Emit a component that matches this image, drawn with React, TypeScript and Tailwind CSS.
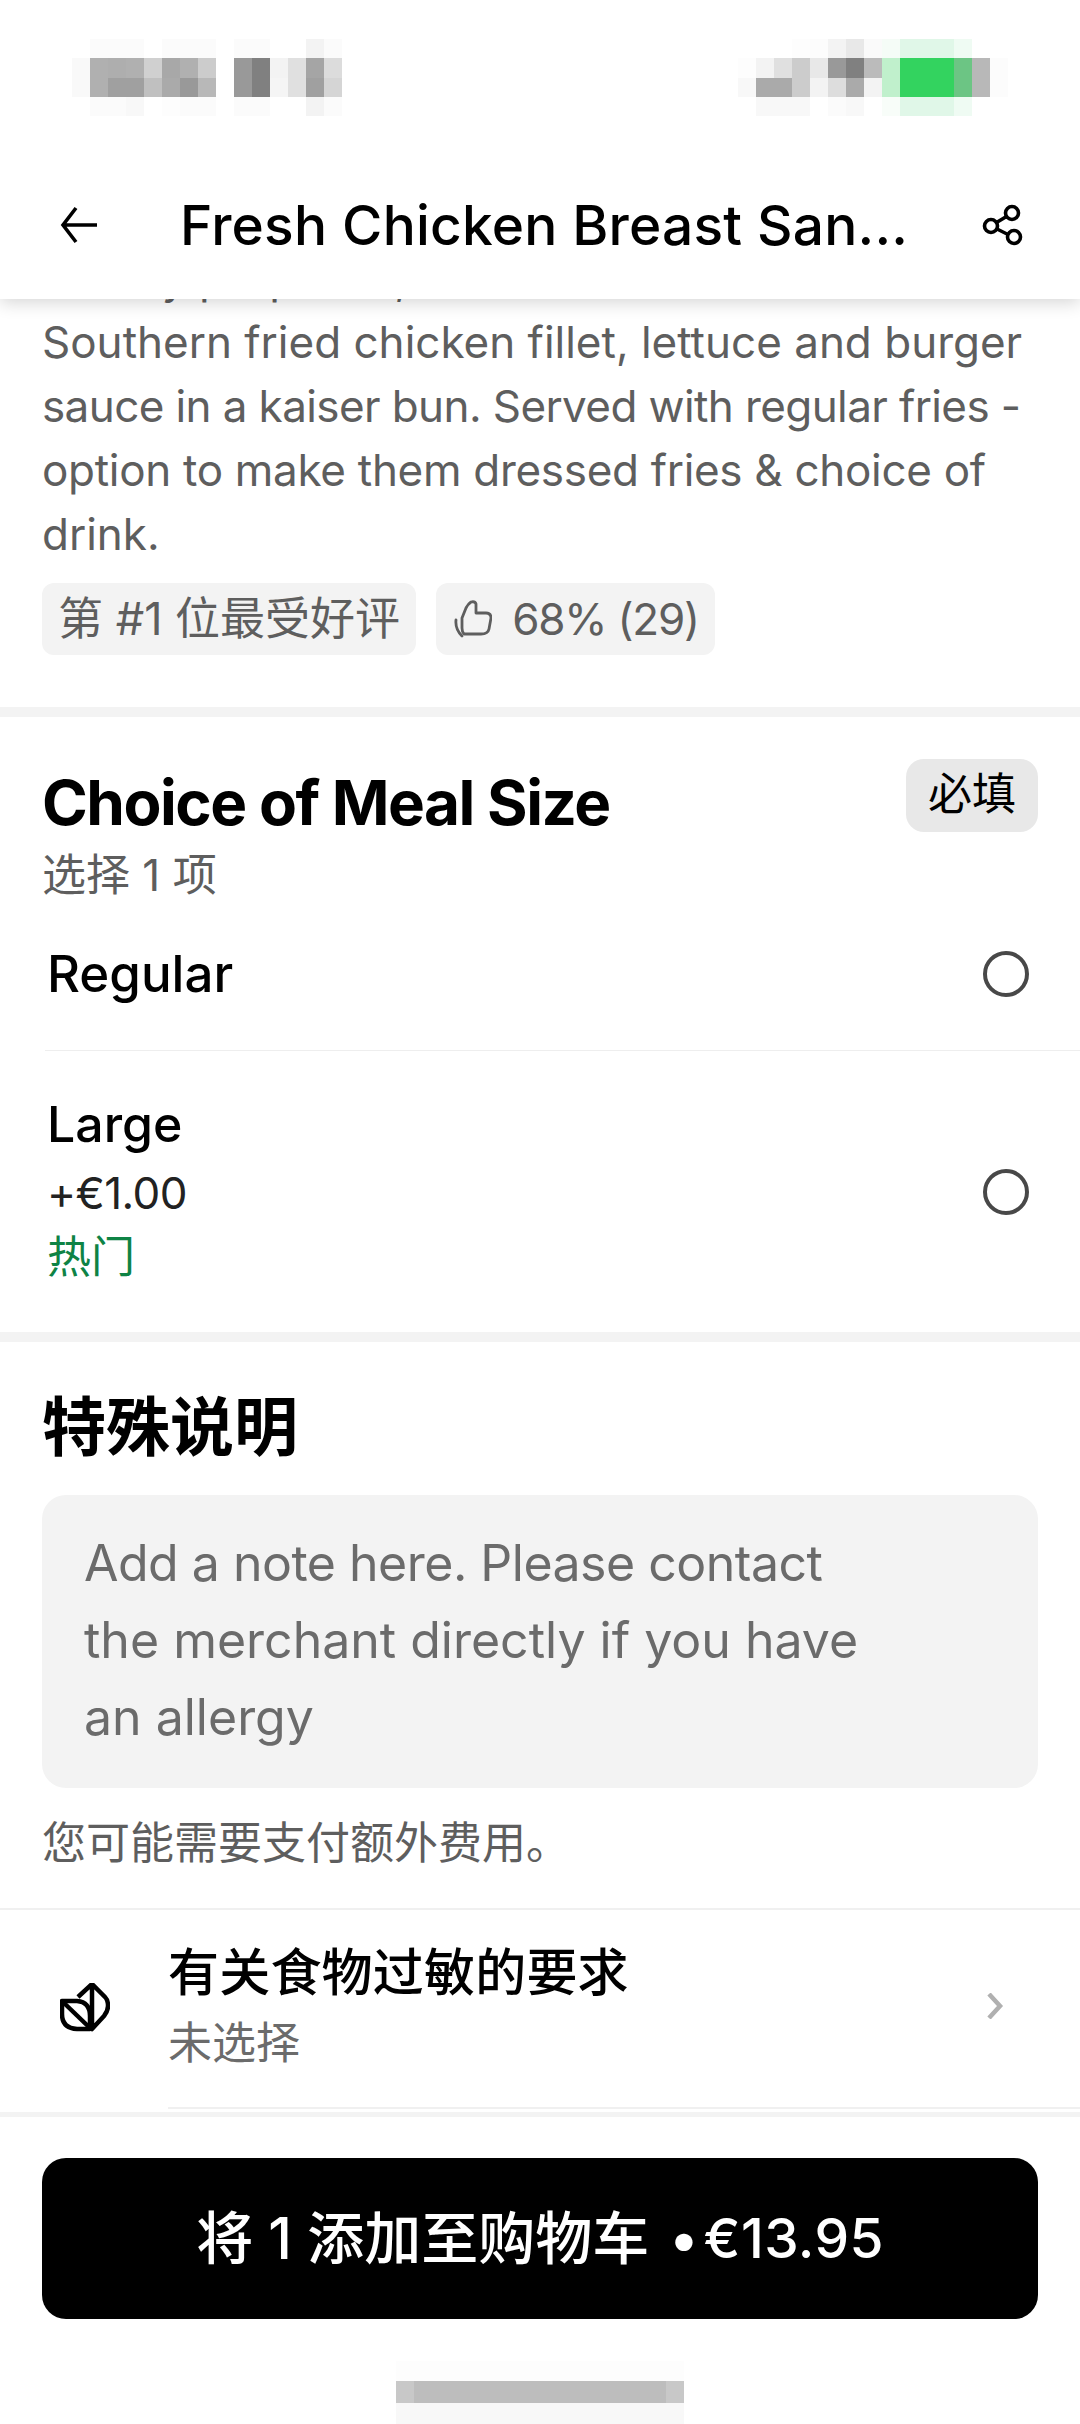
const leftRows = [
  ["#fff","#fbfbfb","#fbfbfb","#fbfbfb","#fff","#fbfbfb","#fbfbfb","#fbfbfb","#fff","#fbfbfb","#fbfbfb","#fff","#fff","#f3f3f3","#fbfbfb","#fff"],
  ["#f9f9f9","#b0b0b0","#aeaeae","#b0b0b0","#d0d0d0","#a8a8a8","#b0b0b0","#cccccc","#fff","#999999","#808080","#f3f3f3","#e0e0e0","#a5a5a5","#dcdcdc","#fff"],
  ["#f9f9f9","#b0b0b0","#a0a0a0","#a0a0a0","#c0c0c0","#aaaaaa","#999999","#b8b8b8","#fff","#999999","#808080","#f5f5f5","#e0e0e0","#a0a0a0","#d5d5d5","#fff"],
  ["#fff","#fbfbfb","#fbfbfb","#f8f8f8","#fff","#fdfdfd","#fbfbfb","#fbfbfb","#fff","#fbfbfb","#fbfbfb","#fff","#fff","#f3f3f3","#fbfbfb","#fff"],
];
const rightRows = [
  ["#fff","#fff","#fff","#fdfdfd","#fcfcfc","#f3f3f3","#e8e8e8","#fafafa","#f5fcf7","#e0f7e8","#e0f7e8","#e0f7e8","#effbf3","#fff","#fff"],
  ["#fdfdfd","#f3f3f3","#e0e0e0","#cccccc","#e8e8e8","#999999","#808080","#bbbbbb","#c0f0cc","#33d35f","#33d35f","#33d35f","#6cc584","#b8b8b8","#fcfcfc"],
  ["#f8f8f8","#aaaaaa","#aaaaaa","#cccccc","#f3f3f3","#dddddd","#aaaaaa","#f3f3f3","#c0f0cc","#33d35f","#33d35f","#33d35f","#6cc584","#b8b8b8","#fcfcfc"],
  ["#fff","#f8f8f8","#f8f8f8","#f8f8f8","#fff","#fbfbfb","#f8f8f8","#fff","#f8fdf9","#e0f7e8","#e0f7e8","#e0f7e8","#effbf3","#fff","#fff"],
];

function Mosaic({ rows }: { rows: string[][] }) {
  const w = rows[0].length * 18;
  return (
    <svg width={w} height={77} viewBox={`0 0 ${w} 77`} shapeRendering="crispEdges">
      {rows.map((r, y) =>
        r.map((c, x) => <rect key={`${x}-${y}`} x={x * 18} y={y * 19.25} width={18} height={19.25} fill={c} />)
      )}
    </svg>
  );
}

function Radio() {
  return <div className="w-[46px] h-[46px] rounded-full border-[4px] border-[#484848] shrink-0" />;
}

export default function App() {
  return (
    <div
      className="w-[1080px] h-[2424px] overflow-hidden bg-white flex flex-col text-black"
      style={{ fontFamily: 'Inter, "Noto Sans CJK SC", sans-serif' }}
    >
      {/* Top bar */}
      <header className="relative z-10 h-[299px] shrink-0 bg-white shadow-[0_4px_16px_rgba(0,0,0,0.16)]">
        <div className="flex justify-between pl-[72px] pr-[72px] pt-[39px] h-[187px]">
          <Mosaic rows={leftRows} />
          <Mosaic rows={rightRows} />
        </div>
        <div className="flex items-center h-[76px] pl-[60px] pr-[56px]">
          <svg width="38" height="38" viewBox="0 0 38 38" fill="none" stroke="#000" strokeWidth="3.6" className="shrink-0">
            <path d="M16 2 L3 19 L16 36 M3 19 H37" />
          </svg>
          <div className="ml-[82px] w-[740px] text-[55px] leading-[76px] font-medium whitespace-nowrap tracking-[0.2px]">Fresh Chicken Breast San...</div>
          <svg width="42" height="42" viewBox="0 0 42 42" fill="none" stroke="#000" strokeWidth="3.6" className="ml-auto shrink-0">
            <circle cx="30" cy="9" r="6.5" />
            <circle cx="9" cy="22" r="6.5" />
            <circle cx="32" cy="33" r="6.5" />
            <path d="M24.5 12.5 L14.5 18.5 M15 25 L26 30.5" />
          </svg>
        </div>
      </header>

      {/* Description */}
      <section className="px-[42px] -mt-[53px] text-[#5e5e5e]">
        <div className="text-[44px] leading-[64px] whitespace-nowrap">
          <p>dietary purposes,</p>
          <p>Southern fried chicken fillet, lettuce and burger</p>
          <p className="tracking-[-0.6px]">sauce in a kaiser bun. Served with regular fries -</p>
          <p className="tracking-[-0.3px]">option to make them dressed fries &amp; choice of</p>
          <p>drink.</p>
        </div>
        <div className="flex gap-[20px] mt-[17px] text-[44px] leading-[72px]">
          <span className="h-[72px] px-[16px] rounded-[12px] bg-[#f3f3f3] whitespace-nowrap text-[45px]">第 #1 位最受好评</span>
          <span className="h-[72px] pl-[18px] pr-[16px] rounded-[12px] bg-[#f3f3f3] flex items-center gap-[20px] whitespace-nowrap tracking-[-1.2px]">
            <svg width="38" height="38" viewBox="0 0 38 38" fill="none" stroke="#5e5e5e" strokeWidth="2.8" strokeLinejoin="round" strokeLinecap="round">
              <path d="M10 34 H27 Q34 34 35 29 L37 18 Q37 13 32 13 H22 V4 Q21 1 17 2 Q14 4 12 8 L8 18 V28 Q8 32 10 34 Z" />
              <path d="M2 20 Q1 29 8 36" />
            </svg>
            68% (29)
          </span>
        </div>
      </section>

      <div className="h-[10px] bg-[#f3f3f3] mt-[52px] shrink-0" />

      {/* Meal size */}
      <section>
        <div className="pl-[42px] pr-[42px] pt-[42px] flex justify-between items-start">
          <div>
            <h2 className="text-[62px] leading-[72px] font-bold tracking-[-1.5px] mt-[8px]">Choice of Meal Size</h2>
            <p className="text-[44px] leading-[56px] text-[#5e5e5e] mt-[8px]">选择 1 项</p>
          </div>
          <span className="h-[73px] w-[132px] text-center rounded-[18px] bg-[#e8e8e8] text-[44px] leading-[70px]">必填</span>
        </div>
        <div className="flex items-center justify-between pl-[47px] pr-[51px] h-[152px] -mt-[5px]">
          <span className="text-[51px] leading-[60px] font-medium">Regular</span>
          <Radio />
        </div>
        <div className="ml-[45px] h-px bg-[#eeeeee]" />
        <div className="flex items-center justify-between pl-[47px] pr-[51px] h-[281px]">
          <div className="-mt-[3px]">
            <div className="text-[50px] leading-[67px] font-medium">Large</div>
            <div className="text-[44px] leading-[64px] text-[#222222] tracking-[-0.6px] mt-[3px]">+€1.00</div>
            <div className="text-[44px] leading-[64px] text-[#0e8345]">热门</div>
          </div>
          <Radio />
        </div>
      </section>

      <div className="h-[10px] bg-[#f3f3f3] shrink-0" />

      {/* Special instructions */}
      <section className="px-[42px]">
        <h2 className="text-[64px] leading-[80px] font-bold mt-[45px]">特殊说明</h2>
        <div className="mt-[28px] h-[293px] rounded-[24px] bg-[#f3f3f3] pl-[42px] pt-[30px] text-[50px] leading-[77px] text-[#6b6b6b] whitespace-nowrap">
          <p className="tracking-[-0.5px]">Add a note here. Please contact</p>
          <p>the merchant directly if you have</p>
          <p>an allergy</p>
        </div>
        <p className="mt-[24px] text-[44px] leading-[62px] text-[#5e5e5e]">您可能需要支付额外费用。</p>
      </section>

      <div className="h-[2px] bg-[#f0f0f0] mt-[34px] shrink-0" />

      {/* Allergy row */}
      <section className="flex items-center h-[197px] shrink-0">
        <svg width="50" height="50" viewBox="0 0 50 50" fill="none" stroke="#000" strokeWidth="4.5" strokeLinejoin="round" className="ml-[60px] shrink-0 mt-[-1px]">
          <path d="M18 14 L32 1 L45 14 Q48 17 48 23 Q48 28 44 33 L32 46 V1" />
          <path d="M2 18 H17 Q30 19 30 33 V46 H17 Q2 45 2 31 Z" />
          <path d="M4 20 L30 45" />
        </svg>
        <div className="ml-[58px] flex-1 -mt-[3px]">
          <div className="text-[51px] leading-[72px] font-medium tracking-[0.2px]">有关食物过敏的要求</div>
          <div className="text-[44px] leading-[68px] text-[#6b6b6b]">未选择</div>
        </div>
        <svg width="18" height="26" viewBox="0 0 18 26" fill="none" stroke="#b0b0b0" strokeWidth="4.5" className="mr-[76px] mt-[-6px] shrink-0">
          <path d="M3 1 L14 13 L3 25" />
        </svg>
      </section>
      <div className="ml-[168px] h-[2px] bg-[#f0f0f0] shrink-0" />
      <div className="h-[3px] bg-white shrink-0" />
      <div className="h-[5px] bg-[#f3f3f3] shrink-0" />

      {/* Add to cart */}
      <footer className="flex-1 px-[42px] pt-[41px] flex flex-col">
        <button className="h-[161px] shrink-0 rounded-[24px] bg-black text-white text-[55px] font-medium whitespace-nowrap flex items-center justify-center">
          <span className="text-[57px]">将 1 添加至购物车</span>
          <span className="ml-[20px]">•</span>
          <span className="ml-[5px] tracking-[0.4px]">€13.95</span>
        </button>
        <div className="flex justify-center mt-[42px]">
          <svg width="288" height="63" viewBox="0 0 288 63" shapeRendering="crispEdges">
            <rect x="0" y="0" width="288" height="20" fill="#fdfdfd" />
            <rect x="0" y="20" width="288" height="22" fill="#c8c8c8" />
            <rect x="18" y="20" width="252" height="22" fill="#bdbdbd" />
            <rect x="0" y="42" width="288" height="21" fill="#f8f8f8" />
          </svg>
        </div>
      </footer>
    </div>
  );
}
